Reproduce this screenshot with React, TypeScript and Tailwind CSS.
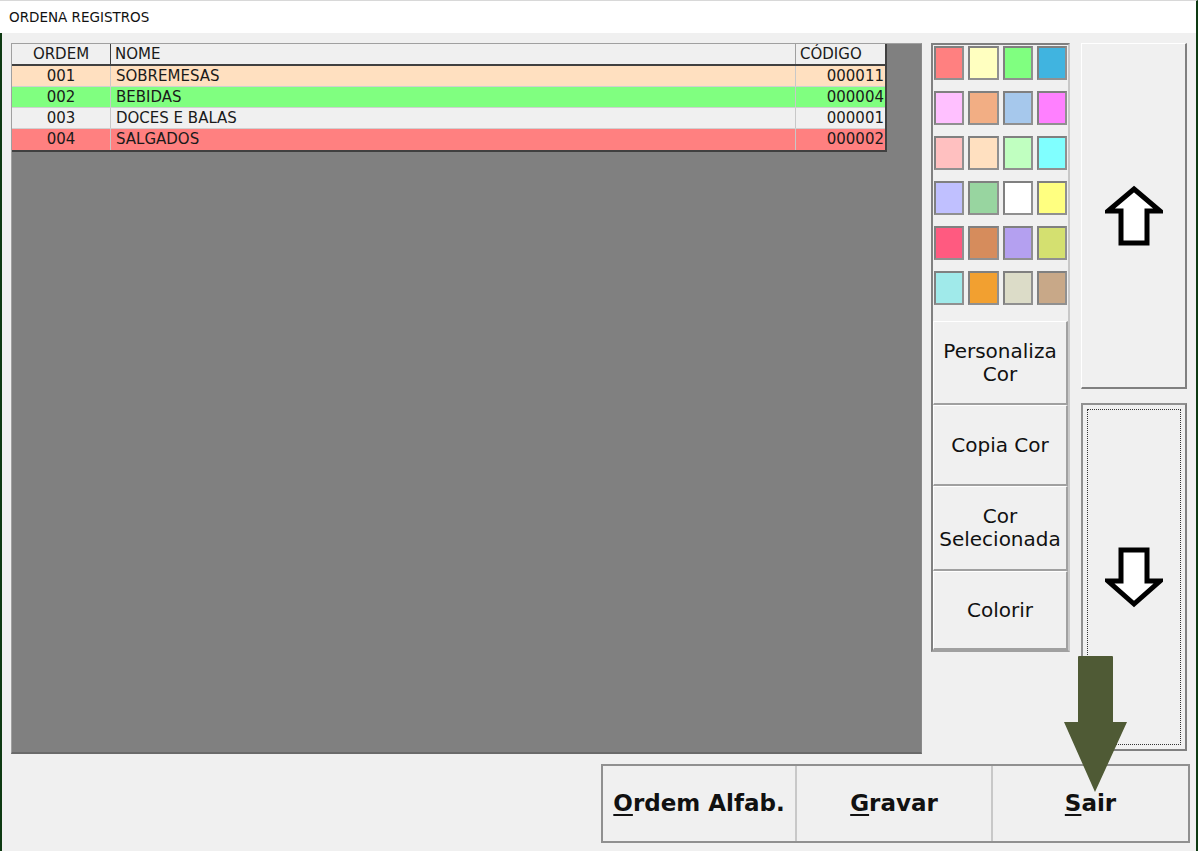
import React from "react";

const rows = [
  { ordem: "001", nome: "SOBREMESAS", codigo: "000011", bg: "bg-[#ffe0c0]" },
  { ordem: "002", nome: "BEBIDAS", codigo: "000004", bg: "bg-[#80ff80]" },
  { ordem: "003", nome: "DOCES E BALAS", codigo: "000001", bg: "bg-[#f0f0f0]" },
  { ordem: "004", nome: "SALGADOS", codigo: "000002", bg: "bg-[#ff8080]" },
];

const swatches = [
  ["bg-[#ff8080]", "bg-[#ffffc0]", "bg-[#80ff80]", "bg-[#40b4e0]"],
  ["bg-[#ffc0ff]", "bg-[#f2ae84]", "bg-[#a6c8ec]", "bg-[#ff80ff]"],
  ["bg-[#ffc0c0]", "bg-[#ffe0c0]", "bg-[#c0ffc0]", "bg-[#80ffff]"],
  ["bg-[#c0c0ff]", "bg-[#98d5a0]", "bg-[#ffffff]", "bg-[#ffff80]"],
  ["bg-[#ff5a80]", "bg-[#d68c5c]", "bg-[#b4a0f0]", "bg-[#d4e070]"],
  ["bg-[#a0eaea]", "bg-[#f2a030]", "bg-[#dcdcc8]", "bg-[#c8a888]"],
];

function UpArrow() {
  return (
    <svg width="58" height="62" viewBox="0 0 58 62">
      <path d="M29 4 L55 26 L42 26 L42 58 L16 58 L16 26 L3 26 Z" fill="#fff" stroke="#000" strokeWidth="5" strokeLinejoin="miter" />
    </svg>
  );
}

function DownArrow() {
  return (
    <svg width="58" height="62" viewBox="0 0 58 62">
      <path d="M16 4 L42 4 L42 35 L55 35 L29 58 L3 35 L16 35 Z" fill="#fff" stroke="#000" strokeWidth="5" strokeLinejoin="miter" />
    </svg>
  );
}

function SideButton(props: { children: React.ReactNode; h: string }) {
  return (
    <div className={`${props.h} flex items-center justify-center text-center leading-[23px] text-[20px] text-[#111] border-t border-l border-t-white border-l-white border-b-2 border-r-2 border-b-[#a0a0a0] border-r-[#a0a0a0] bg-[#f0f0f0]`}>
      {props.children}
    </div>
  );
}

export default function App() {
  return (
    <div className="relative w-[1198px] h-[851px] flex flex-col overflow-hidden bg-[#f0f0f0] font-['DejaVu_Sans',sans-serif]">
      <div className="h-[33px] bg-white flex items-center pl-[9px] text-[13.5px] text-[#111] border-r-2 border-r-[#0e3a12] border-t border-t-[#d8d8d8]">
        ORDENA REGISTROS
      </div>
      <div className="flex-1 flex flex-col pt-[10px] pl-[9px] border-l-2 border-l-[#0e3a12] border-r-2 border-r-[#0e3a12]">
        <div className="flex h-[711px]">
          {/* grid */}
          <div className="w-[911px] h-full bg-[#808080] border-t border-l border-b-2 border-r border-t-[#a0a0a0] border-l-[#a0a0a0] border-b-[#6a6a6a] border-r-[#8a8a8a]">
            <div className="w-[875px] text-[15px] text-[#1a1a1a] border-b-2 border-b-[#404040] border-r-2 border-r-[#404040]">
              <div className="flex h-[22px] bg-[#f0f0f0] border-b-2 border-b-[#404040] leading-[21px]">
                <div className="w-[99px] text-center border-r border-r-[#404040]">ORDEM</div>
                <div className="w-[685px] pl-[4px] border-r border-r-[#a0a0a0]">NOME</div>
                <div className="flex-1 pl-[4px]">CÓDIGO</div>
              </div>
              {rows.map((r) => (
                <div key={r.ordem} className={`flex h-[21px] leading-[21px] ${r.bg} border-b border-b-[#d0d0d0] last:border-b-0`}>
                  <div className="w-[99px] text-center border-r border-r-[#c8c8c8]">{r.ordem}</div>
                  <div className="w-[685px] pl-[5px] border-r border-r-[#c8c8c8]">{r.nome}</div>
                  <div className="flex-1 text-right pr-[1px]">{r.codigo}</div>
                </div>
              ))}
            </div>
          </div>

          {/* palette */}
          <div className="ml-[9px] w-[139px] h-[609px] flex flex-col border-2 border-t-[#808080] border-l-[#808080] border-r-[#c8c8c8] border-b-[#a0a0a0]">
            <div className="grid grid-cols-4 gap-x-[4px] gap-y-[11px] px-[1px] pt-[1px] pb-[16px]">
              {swatches.flat().map((c, i) => (
                <div key={i} className={`h-[34px] ${c} border-2 border-t-[#808080] border-l-[#808080] border-b-[#909090] border-r-[#909090]`} />
              ))}
            </div>
            <SideButton h="h-[84px]">
              <span>Personaliza<br />Cor</span>
            </SideButton>
            <SideButton h="h-[81px]">Copia Cor</SideButton>
            <SideButton h="h-[85px]">
              <span>Cor<br />Selecionada</span>
            </SideButton>
            <SideButton h="flex-1">Colorir</SideButton>
          </div>

          {/* arrows */}
          <div className="ml-[11px] w-[106px] flex flex-col">
            <div className="h-[346px] flex items-center justify-center bg-[#f0f0f0] border-t border-l border-t-white border-l-white border-b-2 border-r-2 border-b-[#808080] border-r-[#808080]">
              <UpArrow />
            </div>
            <div className="mt-[14px] h-[348px] p-[4px] bg-[#f0f0f0] border-2 border-t-[#909090] border-l-[#909090] border-b-[#808080] border-r-[#808080]">
              <div className="h-full border border-dotted border-[#333] flex items-center justify-center">
                <DownArrow />
              </div>
            </div>
          </div>
        </div>

        {/* bottom buttons */}
        <div className="mt-[10px] ml-[590px] w-[589px] h-[79px] flex border-2 border-[#909090] bg-[#f0f0f0]">
          <div className="w-[194px] flex items-center justify-center border-r-2 border-r-[#c8c8c8] text-[23px] font-bold text-[#111]">
            <span><u className="underline-offset-[3px]">O</u>rdem Alfab.</span>
          </div>
          <div className="w-[196px] flex items-center justify-center border-r-2 border-r-[#c8c8c8] text-[23px] font-bold text-[#111]">
            <span><u className="underline-offset-[3px]">G</u>ravar</span>
          </div>
          <div className="flex-1 flex items-center justify-center text-[23px] font-bold text-[#111]">
            <span><u className="underline-offset-[3px]">S</u>air</span>
          </div>
        </div>
      </div>

      {/* annotation arrow */}
      <svg className="absolute left-[1062px] top-[655px]" width="68" height="140" viewBox="0 0 68 140">
        <path d="M16 2 Q16 1 17 1 L50 1 Q51 1 51 2 L51 67 L65 67 L33 137 L2 67 L16 67 Z" fill="#4f5a35" />
      </svg>
    </div>
  );
}
